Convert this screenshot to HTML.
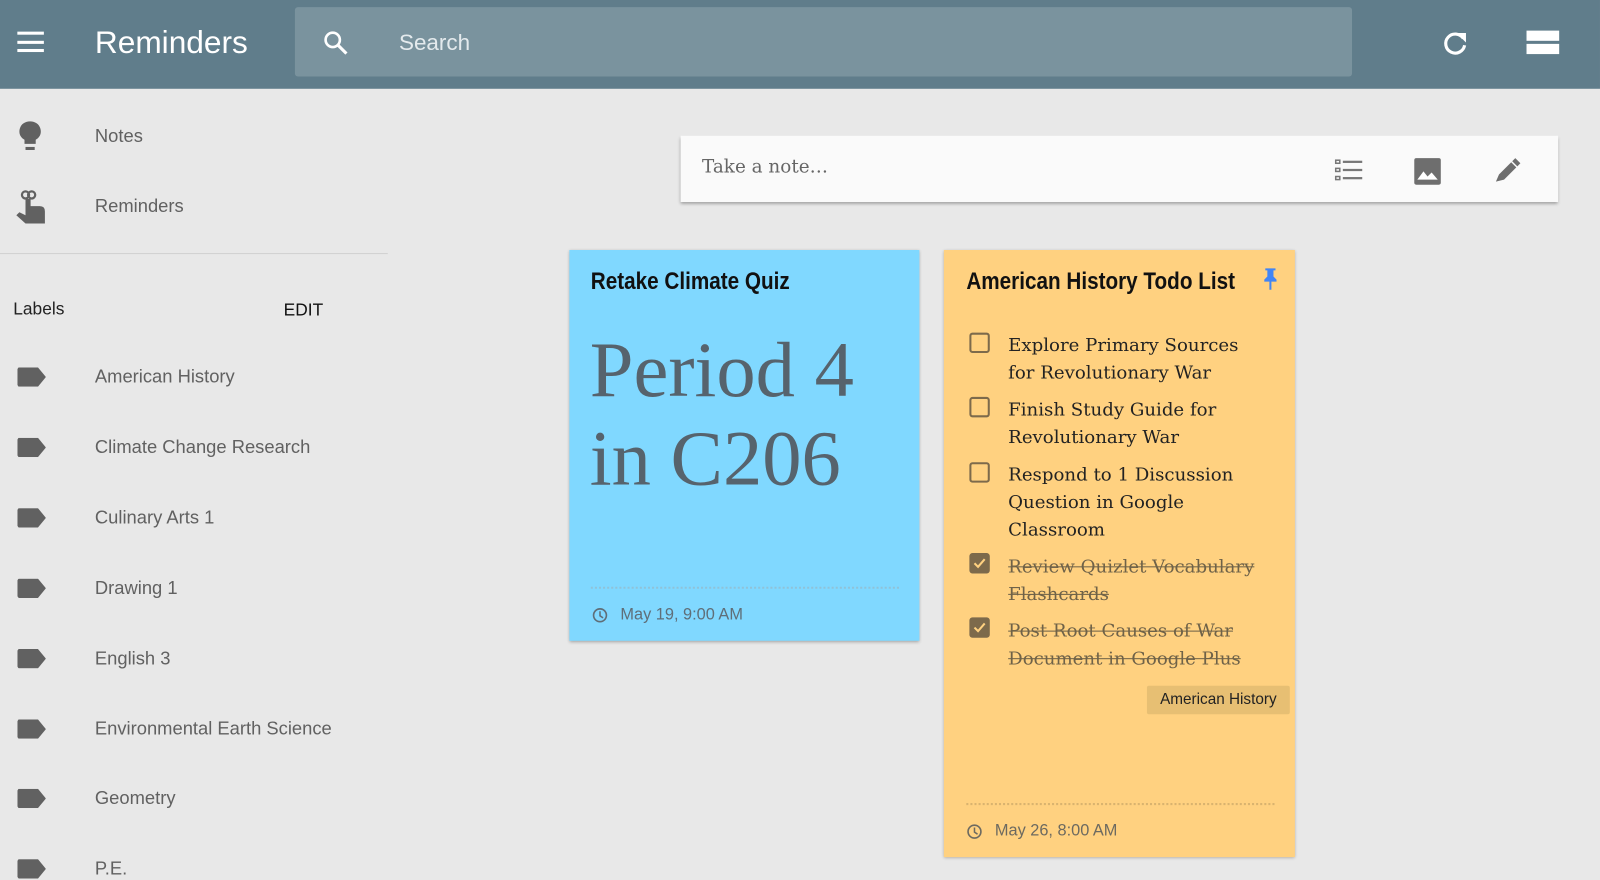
<!DOCTYPE html>
<html><head><meta charset="utf-8"><style>
*{margin:0;padding:0;box-sizing:border-box}
body{width:1600px;height:877px;overflow:hidden;background:#e8e8e8;font-family:"Liberation Sans",sans-serif;position:relative}
#w{position:absolute;left:0;top:0;width:1568px;height:860px;transform:scale(1.0204);transform-origin:0 0}
.hdr{position:absolute;left:0;top:0;width:1568px;height:87px;background:#607d8b}
.abs{position:absolute}
.nav{position:absolute;left:93px;font-size:18px;color:#616161}
.lab{position:absolute;left:17px;width:28px;height:19px;background:#616161;clip-path:polygon(0 10%,4% 0,72% 0,100% 50%,72% 100%,4% 100%,0 90%);border-radius:2px}
.card{position:absolute;box-shadow:0 1px 3px rgba(0,0,0,.3)}
.ttl{font-family:"Liberation Sans",sans-serif;font-weight:bold;font-size:24px;color:#111;position:absolute;transform:scaleX(.845);transform-origin:0 0;white-space:nowrap}
.it{position:absolute;left:63px;font-family:"DejaVu Serif","Liberation Serif",serif;font-size:17.8px;line-height:27px;color:#222;white-space:nowrap}
.cb{position:absolute;left:25px;width:20px;height:20px;border:2px solid #7d6a4b;border-radius:3px}
.cb.on{background:#7d6a4b}
.done{color:#6f6248;text-decoration:line-through}
.foot{position:absolute;font-size:16px;color:#5f6e78}
</style></head><body><div id="w">
<div class="hdr">
 <div class="abs" style="left:17px;top:31px;width:26px;height:3px;background:#fff"></div>
 <div class="abs" style="left:17px;top:40px;width:26px;height:3px;background:#fff"></div>
 <div class="abs" style="left:17px;top:48px;width:26px;height:3px;background:#fff"></div>
 <div class="abs" style="left:93px;top:24px;font-size:31px;color:#fff">Reminders</div>
 <div class="abs" style="left:289px;top:7px;width:1036px;height:68px;background:#7a939e;border-radius:3px"></div>
 <svg class="abs" style="left:315px;top:28px" width="28" height="28" viewBox="0 0 24 24"><circle cx="9.5" cy="9.5" r="6" fill="none" stroke="#fff" stroke-width="2.2"/><path d="M14 14l7 7" stroke="#fff" stroke-width="2.6"/></svg>
 <div class="abs" style="left:391px;top:29px;font-size:22px;color:#e4eaed">Search</div>
 <svg class="abs" style="left:1410px;top:27px" width="32" height="32" viewBox="0 0 24 24"><path d="M18 8A7 7 0 1 0 19 13" fill="none" stroke="#fff" stroke-width="2.3"/><path d="M13 4h7v7z" fill="#fff"/></svg>
 <div class="abs" style="left:1496px;top:30px;width:32px;height:10px;background:#fff"></div>
 <div class="abs" style="left:1496px;top:43px;width:32px;height:10px;background:#fff"></div>
</div>
<svg class="abs" style="left:17px;top:118px" width="25" height="32" viewBox="0 0 25 32"><path d="M12.5 1C6 1 2 5.5 2 11c0 4 2.5 6.5 5 8v4h11v-4c2.5-1.5 5-4 5-8 0-5.5-4-10-10.5-10z" fill="#616161"/><rect x="8" y="26" width="9" height="3" fill="#616161"/></svg>
<div class="nav" style="top:123px">Notes</div>
<svg class="abs" style="left:15px;top:185px" width="32" height="35" viewBox="0 0 32 35"><circle cx="10" cy="6" r="3.5" fill="none" stroke="#616161" stroke-width="2.2"/><circle cx="16" cy="6" r="3.5" fill="none" stroke="#616161" stroke-width="2.2"/><path d="M10 10h5v7h9q5 0 5 5v12H10L1 26l3-3 6 3z" fill="#616161"/></svg>
<div class="nav" style="top:192px">Reminders</div>
<div class="abs" style="left:0;top:248px;width:380px;height:1px;background:#d0d0d0"></div>
<div class="abs" style="left:13px;top:293px;font-size:17px;color:#222">Labels</div>
<div class="abs" style="left:278px;top:294px;font-size:17px;color:#111">EDIT</div>
<div class="lab" style="top:360px"></div><div class="nav" style="top:359px">American History</div>
<div class="lab" style="top:429px"></div><div class="nav" style="top:428px">Climate Change Research</div>
<div class="lab" style="top:498px"></div><div class="nav" style="top:497px">Culinary Arts 1</div>
<div class="lab" style="top:567px"></div><div class="nav" style="top:566px">Drawing 1</div>
<div class="lab" style="top:636px"></div><div class="nav" style="top:635px">English 3</div>
<div class="lab" style="top:705px"></div><div class="nav" style="top:704px">Environmental Earth Science</div>
<div class="lab" style="top:773px"></div><div class="nav" style="top:772px">Geometry</div>
<div class="lab" style="top:842px"></div><div class="nav" style="top:841px">P.E.</div>

<div class="card" style="left:667px;top:133px;width:860px;height:65px;background:#fafafa;box-shadow:0 2px 3px rgba(0,0,0,.35)">
 <div class="abs" style="left:21px;top:20px;font-family:'DejaVu Serif','Liberation Serif',serif;font-size:18px;color:#666">Take a note…</div>
 <svg class="abs" style="left:641px;top:22px" width="28" height="24" viewBox="0 0 28 24"><g fill="none" stroke="#777" stroke-width="1.5"><rect x="1" y="2" width="4" height="3"/><rect x="1" y="10" width="4" height="3"/><rect x="1" y="18" width="4" height="3"/></g><g fill="#777"><rect x="8" y="2.5" width="19" height="2.2"/><rect x="8" y="10.5" width="19" height="2.2"/><rect x="8" y="18.5" width="19" height="2.2"/></g></svg>
 <svg class="abs" style="left:718px;top:21px" width="28" height="28" viewBox="0 0 28 28"><rect x="1" y="1" width="26" height="26" rx="2" fill="#6e6e6e"/><path d="M4 22l6-8 4 5 4-4 6 7z" fill="#fff"/></svg>
 <svg class="abs" style="left:796px;top:20px" width="30" height="30" viewBox="0 0 30 30"><path d="M3 25l3-7L18 6l5 5L11 23zM19 5l3-3 5 5-3 3z" fill="#6e6e6e"/></svg>
</div>

<div class="card" style="left:558px;top:245px;width:343px;height:383px;background:#80d8ff">
 <div class="ttl" style="left:21px;top:17px">Retake Climate Quiz</div>
 <div class="abs" style="left:20px;top:74px;font-family:'Liberation Serif','DejaVu Serif',serif;font-size:77px;line-height:87px;color:#56636d;white-space:nowrap">Period 4<br>in C206</div>
 <div class="abs" style="left:21px;top:330px;width:302px;border-top:2px dotted #8fc2d8"></div>
 <svg class="abs" style="left:22px;top:350px" width="16" height="16" viewBox="0 0 16 16"><circle cx="8" cy="8" r="6.3" fill="none" stroke="#5f6e78" stroke-width="1.6"/><path d="M8 4v4.5l3 2" fill="none" stroke="#5f6e78" stroke-width="1.5"/></svg>
 <div class="foot" style="left:50px;top:349px">May 19, 9:00 AM</div>
</div>

<div class="card" style="left:925px;top:245px;width:344px;height:595px;background:#ffd180">
 <div class="ttl" style="left:22px;top:17px">American History Todo List</div>
 <svg class="abs" style="left:312px;top:16px" width="16" height="24" viewBox="0 0 16 24"><path d="M3 2h10v2h-2v6l3 3v2H9v8H7v-8H2v-2l3-3V4H3z" fill="#4285f4"/></svg>
 <div class="cb" style="top:81px"></div><div class="it" style="top:80px">Explore Primary Sources<br>for Revolutionary War</div>
 <div class="cb" style="top:144px"></div><div class="it" style="top:143px">Finish Study Guide for<br>Revolutionary War</div>
 <div class="cb" style="top:208px"></div><div class="it" style="top:207px">Respond to 1 Discussion<br>Question in Google<br>Classroom</div>
 <div class="cb on" style="top:297px"><svg width="16" height="16" viewBox="0 0 16 16" style="position:absolute;left:0;top:0"><path d="M3 8l3.5 3.5L13 4" fill="none" stroke="#ffd180" stroke-width="2"/></svg></div><div class="it done" style="top:297px">Review Quizlet Vocabulary<br>Flashcards</div>
 <div class="cb on" style="top:360px"><svg width="16" height="16" viewBox="0 0 16 16" style="position:absolute;left:0;top:0"><path d="M3 8l3.5 3.5L13 4" fill="none" stroke="#ffd180" stroke-width="2"/></svg></div><div class="it done" style="top:360px">Post Root Causes of War<br>Document in Google Plus</div>
 <div class="abs" style="left:199px;top:427px;width:140px;height:28px;background:#e7bf73;border-radius:2px;font-size:15px;color:#222;line-height:28px;text-align:center">American History</div>
 <div class="abs" style="left:22px;top:542px;width:302px;border-top:2px dotted #d9b36f"></div>
 <svg class="abs" style="left:22px;top:562px" width="16" height="16" viewBox="0 0 16 16"><circle cx="8" cy="8" r="6.3" fill="none" stroke="#6d6a60" stroke-width="1.6"/><path d="M8 4v4.5l3 2" fill="none" stroke="#6d6a60" stroke-width="1.5"/></svg>
 <div class="foot" style="left:50px;top:561px;color:#6d6a60">May 26, 8:00 AM</div>
</div>
</div></body></html>
